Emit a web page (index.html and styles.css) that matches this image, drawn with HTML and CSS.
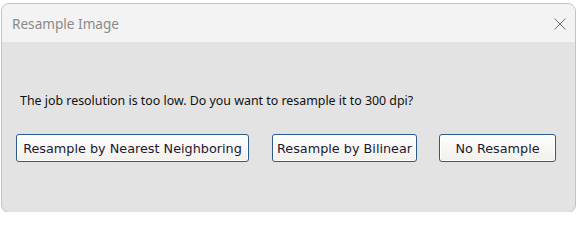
FILE: index.html
```html
<!DOCTYPE html>
<html>
<head>
<meta charset="utf-8">
<link rel="stylesheet" href="styles.css">
</head>
<body>
<div class="window">
  <div class="titlebar">
    <span class="title">Resample Image</span>
    <svg class="close" width="12" height="12" viewBox="0 0 12 12"><path d="M0.5 0.5 L11.5 11.5 M11.5 0.5 L0.5 11.5" stroke="#6e6e6e" stroke-width="1" fill="none"/></svg>
  </div>
  <div class="content">
    <p class="message">The job resolution is too low. Do you want to resample it to 300 dpi?</p>
    <div class="buttons">
      <button class="btn btn-nearest">Resample by Nearest Neighboring</button>
      <button class="btn btn-bilinear">Resample by Bilinear</button>
      <button class="btn btn-none">No Resample</button>
    </div>
  </div>
</div>
</body>
</html>
```
FILE: styles.css
```css
html, body {
  margin: 0;
  padding: 0;
  background: #ffffff;
  overflow: hidden;
}
body {
  width: 578px;
  height: 212px;
}
.window {
  margin: 3px 0 0 1px;
  width: 575px;
  height: 210px;
  box-sizing: border-box;
  border: 1px solid #c4c4c4;
  border-radius: 8px 8px 8px 8px;
  background: #e3e3e3;
  overflow: hidden;
  display: flex;
  flex-direction: column;
}
.titlebar {
  height: 38px;
  flex: none;
  background: #f3f3f3;
  display: flex;
  align-items: center;
  justify-content: space-between;
  padding: 0 9px 0 10px;
}
.title {
  font-family: "Noto Sans", "Open Sans", sans-serif;
  font-size: 13.6px;
  color: #8a8a8a;
  margin-top: 1px;
}
.close {
  display: block;
  margin-top: 2px;
}
.content {
  flex: 1;
  padding: 51px 0 0 14px;
}
.message {
  margin: 0 0 0 4px;
  font-family: "Noto Sans", "Open Sans", sans-serif;
  font-size: 12.4px;
  color: #111111;
  line-height: 16px;
}
.buttons {
  display: flex;
  gap: 23px;
  margin-top: 25px;
}
.btn {
  height: 28px;
  box-sizing: border-box;
  border: 1px solid #2c5a8c;
  border-radius: 3px;
  background: linear-gradient(#fefefe, #f2f0ea);
  font-family: "DejaVu Sans", Verdana, sans-serif;
  font-size: 12.8px;
  color: #1a1a33;
  padding: 0 4px;
  box-shadow: inset 0 0 0 1px #ffffff;
  white-space: nowrap;
}
.btn-nearest { width: 233px; }
.btn-bilinear { width: 145px; }
.btn-none { width: 117px; margin-left: -1px; }
```
